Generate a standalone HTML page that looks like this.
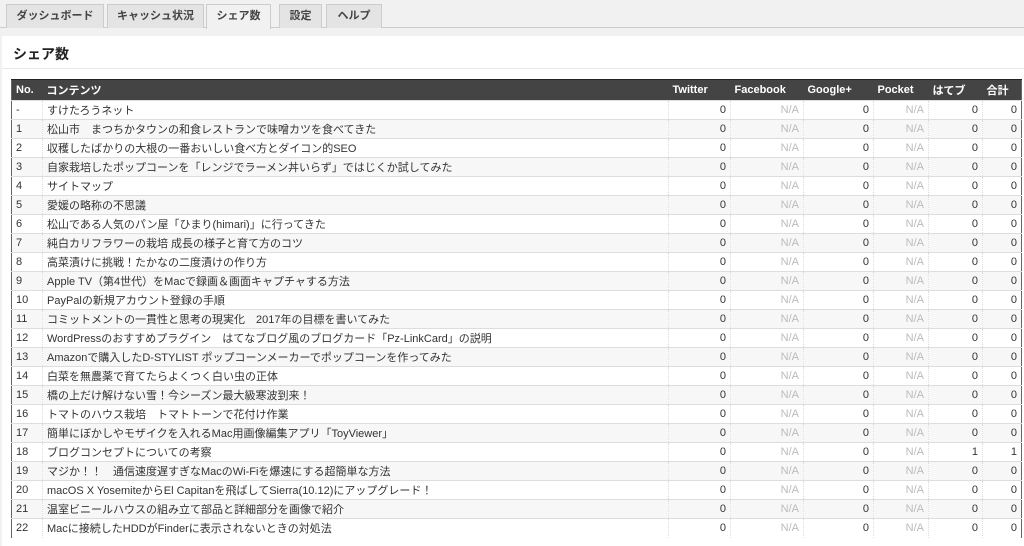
<!DOCTYPE html>
<html><head><meta charset="utf-8"><style>
*{margin:0;padding:0;box-sizing:border-box}
body{width:1024px;height:541px;overflow:hidden;background:#f1f1f1;font-family:"Liberation Sans","Noto Sans CJK JP",sans-serif;font-size:11px;color:#333}
.tabs{position:absolute;top:4px;left:6px;height:24px}
.tab{position:absolute;top:0;height:24px;border:1px solid #ccc;border-bottom:none;background:#e4e4e4;font-weight:bold;font-size:11px;color:#444;text-align:center;line-height:22px}
.tab.act{background:#f1f1f1;height:25px}
.line{position:absolute;top:27px;left:0;width:1024px;height:1px;background:#ccc}
.panel{position:absolute;top:36px;left:2px;width:1022px;height:510px;background:#fff}
h2{position:absolute;top:44px;left:13px;font-size:14px;font-weight:bold;color:#222}
.hr{position:absolute;top:68px;left:2px;width:1022px;height:1px;background:#e8e8e8}
table{position:absolute;top:79px;left:11px;width:1010px;border-collapse:collapse;table-layout:fixed;border-left:1px solid #666;border-right:1px solid #666}
th{background:#444;color:#fff;font-weight:bold;height:21px;text-align:left;padding:0 4px;font-size:11px;border-top:1px solid #222}
td{height:19px;padding:0 4px;border-top:1px solid #ddd;border-left:1px dotted #ddd;white-space:nowrap;overflow:hidden;font-size:11px}
td:first-child{border-left:none}
td.n{text-align:right}
td.na{text-align:right;color:#bbb}
tr:nth-child(odd) td{background:#f7f7f7}
</style></head><body>
<div class="line"></div>
<div class="tabs">
<div class="tab" style="left:0;width:98px">ダッシュボード</div>
<div class="tab" style="left:101px;width:97px">キャッシュ状況</div>
<div class="tab act" style="left:200px;width:65px">シェア数</div>
<div class="tab" style="left:273px;width:43px">設定</div>
<div class="tab" style="left:320px;width:56px">ヘルプ</div>
</div>
<div class="panel"></div>
<h2>シェア数</h2>
<div class="hr"></div>
<table>
<colgroup><col style="width:31px"><col style="width:626px"><col style="width:62px"><col style="width:73px"><col style="width:70px"><col style="width:55px"><col style="width:54px"><col style="width:39px"></colgroup>
<tr><th>No.</th><th>コンテンツ</th><th>Twitter</th><th>Facebook</th><th>Google+</th><th>Pocket</th><th>はてブ</th><th>合計</th></tr>
<tr><td>-</td><td>すけたろうネット</td><td class="n">0</td><td class="na">N/A</td><td class="n">0</td><td class="na">N/A</td><td class="n">0</td><td class="n">0</td></tr>
<tr><td>1</td><td>松山市　まつちかタウンの和食レストランで味噌カツを食べてきた</td><td class="n">0</td><td class="na">N/A</td><td class="n">0</td><td class="na">N/A</td><td class="n">0</td><td class="n">0</td></tr>
<tr><td>2</td><td>収穫したばかりの大根の一番おいしい食べ方とダイコン的SEO</td><td class="n">0</td><td class="na">N/A</td><td class="n">0</td><td class="na">N/A</td><td class="n">0</td><td class="n">0</td></tr>
<tr><td>3</td><td>自家栽培したポップコーンを「レンジでラーメン丼いらず」ではじくか試してみた</td><td class="n">0</td><td class="na">N/A</td><td class="n">0</td><td class="na">N/A</td><td class="n">0</td><td class="n">0</td></tr>
<tr><td>4</td><td>サイトマップ</td><td class="n">0</td><td class="na">N/A</td><td class="n">0</td><td class="na">N/A</td><td class="n">0</td><td class="n">0</td></tr>
<tr><td>5</td><td>愛媛の略称の不思議</td><td class="n">0</td><td class="na">N/A</td><td class="n">0</td><td class="na">N/A</td><td class="n">0</td><td class="n">0</td></tr>
<tr><td>6</td><td>松山である人気のパン屋「ひまり(himari)」に行ってきた</td><td class="n">0</td><td class="na">N/A</td><td class="n">0</td><td class="na">N/A</td><td class="n">0</td><td class="n">0</td></tr>
<tr><td>7</td><td>純白カリフラワーの栽培 成長の様子と育て方のコツ</td><td class="n">0</td><td class="na">N/A</td><td class="n">0</td><td class="na">N/A</td><td class="n">0</td><td class="n">0</td></tr>
<tr><td>8</td><td>高菜漬けに挑戦！たかなの二度漬けの作り方</td><td class="n">0</td><td class="na">N/A</td><td class="n">0</td><td class="na">N/A</td><td class="n">0</td><td class="n">0</td></tr>
<tr><td>9</td><td>Apple TV（第4世代）をMacで録画＆画面キャプチャする方法</td><td class="n">0</td><td class="na">N/A</td><td class="n">0</td><td class="na">N/A</td><td class="n">0</td><td class="n">0</td></tr>
<tr><td>10</td><td>PayPalの新規アカウント登録の手順</td><td class="n">0</td><td class="na">N/A</td><td class="n">0</td><td class="na">N/A</td><td class="n">0</td><td class="n">0</td></tr>
<tr><td>11</td><td>コミットメントの一貫性と思考の現実化　2017年の目標を書いてみた</td><td class="n">0</td><td class="na">N/A</td><td class="n">0</td><td class="na">N/A</td><td class="n">0</td><td class="n">0</td></tr>
<tr><td>12</td><td>WordPressのおすすめプラグイン　はてなブログ風のブログカード「Pz-LinkCard」の説明</td><td class="n">0</td><td class="na">N/A</td><td class="n">0</td><td class="na">N/A</td><td class="n">0</td><td class="n">0</td></tr>
<tr><td>13</td><td>Amazonで購入したD-STYLIST ポップコーンメーカーでポップコーンを作ってみた</td><td class="n">0</td><td class="na">N/A</td><td class="n">0</td><td class="na">N/A</td><td class="n">0</td><td class="n">0</td></tr>
<tr><td>14</td><td>白菜を無農薬で育てたらよくつく白い虫の正体</td><td class="n">0</td><td class="na">N/A</td><td class="n">0</td><td class="na">N/A</td><td class="n">0</td><td class="n">0</td></tr>
<tr><td>15</td><td>橋の上だけ解けない雪！今シーズン最大級寒波到来！</td><td class="n">0</td><td class="na">N/A</td><td class="n">0</td><td class="na">N/A</td><td class="n">0</td><td class="n">0</td></tr>
<tr><td>16</td><td>トマトのハウス栽培　トマトトーンで花付け作業</td><td class="n">0</td><td class="na">N/A</td><td class="n">0</td><td class="na">N/A</td><td class="n">0</td><td class="n">0</td></tr>
<tr><td>17</td><td>簡単にぼかしやモザイクを入れるMac用画像編集アプリ「ToyViewer」</td><td class="n">0</td><td class="na">N/A</td><td class="n">0</td><td class="na">N/A</td><td class="n">0</td><td class="n">0</td></tr>
<tr><td>18</td><td>ブログコンセプトについての考察</td><td class="n">0</td><td class="na">N/A</td><td class="n">0</td><td class="na">N/A</td><td class="n">1</td><td class="n">1</td></tr>
<tr><td>19</td><td>マジか！！　通信速度遅すぎなMacのWi-Fiを爆速にする超簡単な方法</td><td class="n">0</td><td class="na">N/A</td><td class="n">0</td><td class="na">N/A</td><td class="n">0</td><td class="n">0</td></tr>
<tr><td>20</td><td>macOS X YosemiteからEl Capitanを飛ばしてSierra(10.12)にアップグレード！</td><td class="n">0</td><td class="na">N/A</td><td class="n">0</td><td class="na">N/A</td><td class="n">0</td><td class="n">0</td></tr>
<tr><td>21</td><td>温室ビニールハウスの組み立て部品と詳細部分を画像で紹介</td><td class="n">0</td><td class="na">N/A</td><td class="n">0</td><td class="na">N/A</td><td class="n">0</td><td class="n">0</td></tr>
<tr><td>22</td><td>Macに接続したHDDがFinderに表示されないときの対処法</td><td class="n">0</td><td class="na">N/A</td><td class="n">0</td><td class="na">N/A</td><td class="n">0</td><td class="n">0</td></tr>
</table>
</body></html>
